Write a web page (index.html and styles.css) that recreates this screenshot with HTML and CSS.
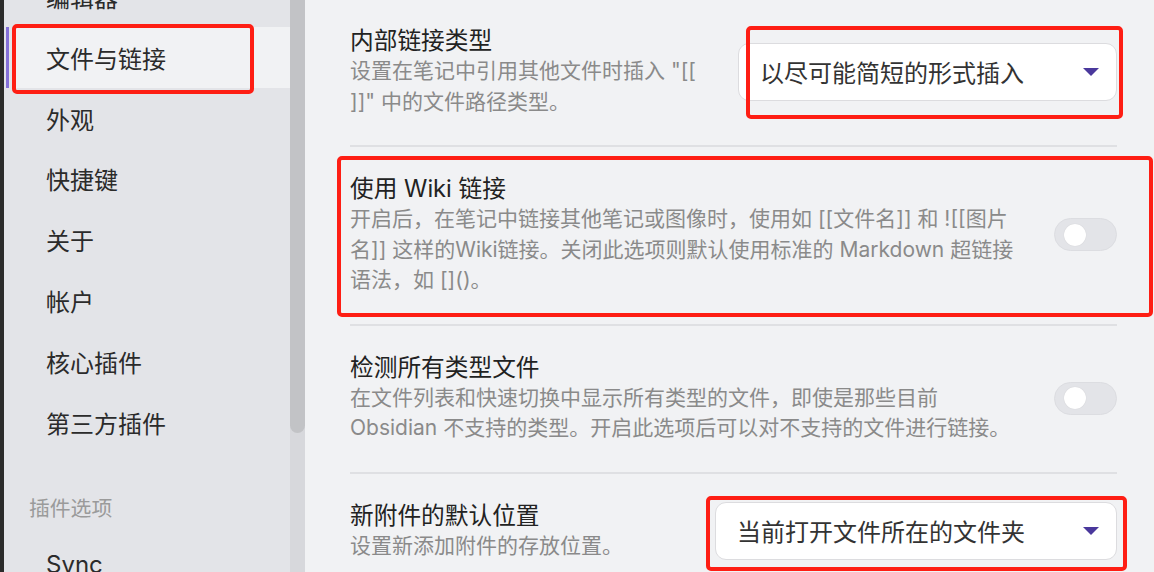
FILE: index.html
```html
<!DOCTYPE html>
<html lang="zh-CN">
<head>
<meta charset="utf-8">
<title>设置 - 文件与链接</title>
<link rel="stylesheet" href="styles.css">
</head>
<body>
<div class="app">
  <div class="edge"></div>
  <aside class="sidebar">
    <nav class="nav">
      <div class="nav-item">编辑器</div>
      <div class="nav-item active">文件与链接</div>
      <div class="nav-item">外观</div>
      <div class="nav-item">快捷键</div>
      <div class="nav-item">关于</div>
      <div class="nav-item">帐户</div>
      <div class="nav-item">核心插件</div>
      <div class="nav-item">第三方插件</div>
      <div class="nav-header">插件选项</div>
      <div class="nav-item">Sync</div>
    </nav>
  </aside>
  <div class="scrollbar"><div class="thumb"></div></div>
  <main class="main">
    <div class="setting first">
      <div class="info">
        <div class="name">内部链接类型</div>
        <div class="desc">设置在笔记中引用其他文件时插入 "[[<br>]]" 中的文件路径类型。</div>
      </div>
      <div class="control">
        <div class="dropdown w1"><span>以尽可能简短的形式插入</span><span class="caret"></span></div>
      </div>
    </div>
    <div class="setting">
      <div class="info">
        <div class="name">使用 Wiki 链接</div>
        <div class="desc">开启后，在笔记中链接其他笔记或图像时，使用如 [[文件名]] 和 ![[图片<br>名]] 这样的Wiki链接。关闭此选项则默认使用标准的 Markdown 超链接<br>语法，如 []()。</div>
      </div>
      <div class="control">
        <div class="toggle"><div class="knob"></div></div>
      </div>
    </div>
    <div class="setting">
      <div class="info">
        <div class="name">检测所有类型文件</div>
        <div class="desc">在文件列表和快速切换中显示所有类型的文件，即使是那些目前<br>Obsidian 不支持的类型。开启此选项后可以对不支持的文件进行链接。</div>
      </div>
      <div class="control">
        <div class="toggle"><div class="knob"></div></div>
      </div>
    </div>
    <div class="setting">
      <div class="info">
        <div class="name">新附件的默认位置</div>
        <div class="desc">设置新添加附件的存放位置。</div>
      </div>
      <div class="control">
        <div class="dropdown w2"><span>当前打开文件所在的文件夹</span><span class="caret"></span></div>
      </div>
    </div>
  </main>
</div>
<div class="mark mark-nav"></div>
<div class="mark mark-dd1"></div>
<div class="mark mark-wiki"></div>
<div class="mark mark-dd2"></div>
</body>
</html>
```

FILE: styles.css
```css
* { box-sizing: border-box; }
html, body {
  margin: 0;
  padding: 0;
  width: 1154px;
  height: 572px;
  overflow: hidden;
  background: #f1f2f4;
  font-family: "Inter", "Noto Sans CJK SC", sans-serif;
}
.app {
  display: flex;
  height: 572px;
}
.edge {
  width: 4px;
  flex-shrink: 0;
  background: #2b2b2b;
}
.sidebar {
  width: 286px;
  flex-shrink: 0;
  background: #e3e4e8;
  overflow: hidden;
}
.nav {
  margin-top: -33.8px;
}
.nav-item {
  height: 60.8px;
  display: flex;
  align-items: center;
  padding-left: 37px;
  font-size: 24px;
  color: #2b2b2b;
  margin-left: 2px;
  border-left: 3px solid transparent;
}
.nav-item.active {
  border-left-color: #8470d8;
  background: linear-gradient(to right, #e3e4e8 0, #e3e4e8 3px, #f1f2f4 3px);
}
.nav-header {
  height: 56px;
  margin-top: 26px;
  display: flex;
  align-items: center;
  padding-left: 25px;
  font-size: 20.8px;
  color: #9a9a9a;
}
.scrollbar {
  width: 15px;
  flex-shrink: 0;
  background: #d7d8dc;
}
.thumb {
  height: 433px;
  background: #c2c3c6;
  border-radius: 0 0 8px 8px;
}
.main {
  flex: 1;
  padding: 0 37px 0 45px;
}
.setting {
  display: flex;
  align-items: center;
  gap: 20px;
  border-top: 2px solid #dfe0e3;
  padding: 27px 0 28px;
}
.setting.first {
  border-top: none;
  padding-top: 26px;
}
.info {
  flex: 1;
  min-width: 0;
}
.name {
  font-size: 23.7px;
  line-height: 30px;
  color: #222222;
}
.desc {
  font-size: 21px;
  line-height: 30.5px;
  color: #8a8a8a;
  white-space: nowrap;
}
.control {
  flex-shrink: 0;
  display: flex;
  justify-content: flex-end;
}
.dropdown {
  height: 58px;
  background: #ffffff;
  border: 1.5px solid #dcdcdf;
  border-radius: 11px;
  display: flex;
  align-items: center;
  justify-content: space-between;
  padding: 0 17px 0 21px;
  font-size: 24px;
  color: #333333;
}
.dropdown.w1 { width: 379px; }
.dropdown.w2 { width: 402px; }
.caret {
  width: 0;
  height: 0;
  border-left: 8px solid transparent;
  border-right: 8px solid transparent;
  border-top: 8px solid #4a389c;
}
.toggle {
  width: 63px;
  height: 33px;
  border-radius: 17px;
  background: #e3e4e8;
  border: 1px solid #dcdde1;
  display: flex;
  align-items: center;
  padding-left: 9px;
}
.knob {
  width: 22px;
  height: 22px;
  border-radius: 50%;
  background: #ffffff;
  box-shadow: 0 0 1px rgba(0,0,0,0.15);
}
.mark {
  position: absolute;
  border: 4px solid #fe1e14;
  border-radius: 5px;
  pointer-events: none;
}
.mark-nav { left: 12px; top: 24px; width: 242px; height: 70px; }
.mark-dd1 { left: 746px; top: 26px; width: 377px; height: 93px; }
.mark-wiki { left: 337px; top: 156px; width: 816px; height: 161px; }
.mark-dd2 { left: 706px; top: 496px; width: 421px; height: 75px; }
```
